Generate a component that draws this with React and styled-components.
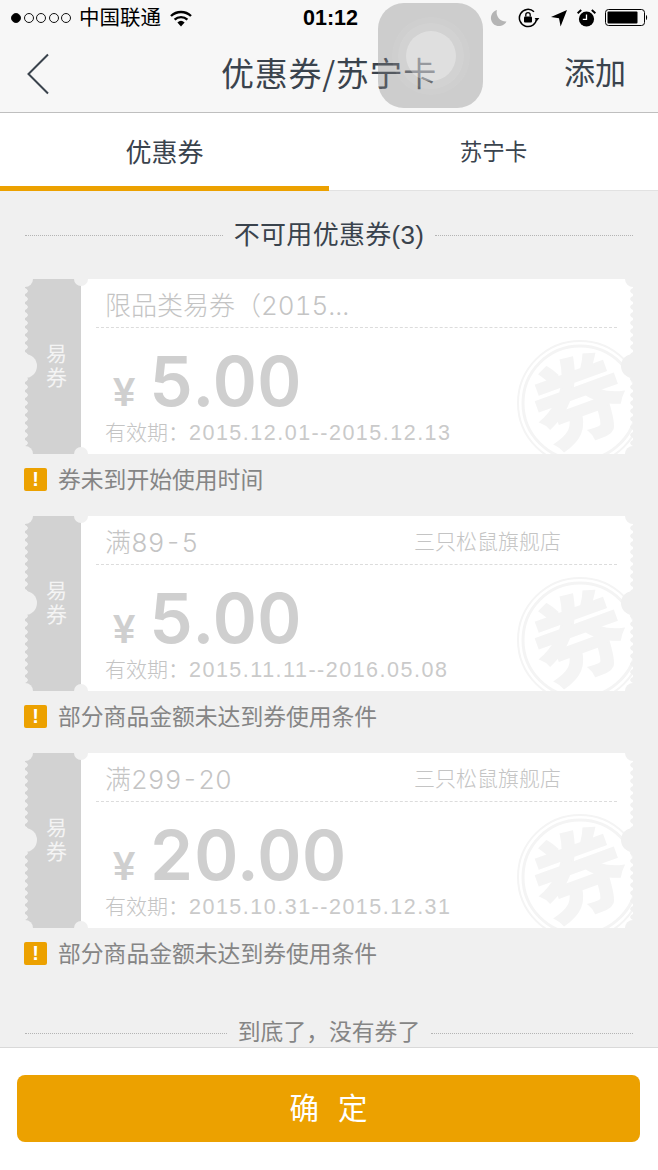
import React from 'react';
import styled, { createGlobalStyle } from 'styled-components';

const ORANGE = '#eca100';
const PAGE_BG = '#f0f0f0';

const GlobalStyle = createGlobalStyle`
  * { box-sizing: border-box; }
  html, body { margin: 0; padding: 0; background: ${PAGE_BG}; }
  body { font-family: "Liberation Sans", "Noto Sans CJK SC", sans-serif; }
`;

const Page = styled.div`
  position: relative;
  width: 658px;
  height: 1170px;
  display: flex;
  flex-direction: column;
  overflow: hidden;
  background: ${PAGE_BG};
`;

const Header = styled.header`
  background: #f7f7f7;
  border-bottom: 1px solid #bfbfbf;
  height: 113px;
`;

const StatusBar = styled.div`
  height: 36px;
  padding: 0 10px 0 11px;
  display: flex;
  align-items: center;
  color: #000;
`;

const StatusSide = styled.div`
  flex: 1;
  display: flex;
  align-items: center;
  justify-content: ${({ $end }) => ($end ? 'flex-end' : 'flex-start')};
`;

const Signal = styled.div`
  display: flex;
  gap: 2.5px;
  margin-right: 8px;
`;

const Dot = styled.span`
  width: 10px;
  height: 10px;
  border-radius: 50%;
  border: 1px solid #111;
  background: ${({ $on }) => ($on ? '#000' : 'transparent')};
`;

const Carrier = styled.span`
  font-size: 20.5px;
  line-height: 36px;
  margin-right: 9px;
`;

const Clock = styled.span`
  font-size: 21.5px;
  font-weight: 700;
  width: 60px;
  padding-left: 2px;
  text-align: center;
`;

const NavBar = styled.div`
  height: 76px;
  padding: 0 32px 0 26px;
  display: grid;
  grid-template-columns: 1fr auto 1fr;
  align-items: center;
  color: #3a434d;
`;

const BackButton = styled.div`
  width: 24px;
  display: flex;
`;

const NavTitle = styled.div`
  font-family: "Noto Sans CJK SC", sans-serif;
  font-size: 33px;
  line-height: 72px;
  letter-spacing: 0.7px;
  margin: 0 0 4px 6px;
`;

const NavAction = styled.div`
  font-size: 31px;
  line-height: 76px;
  text-align: right;
`;

const AssistiveTouch = styled.div`
  position: absolute;
  left: 378px;
  top: 3px;
  width: 105px;
  height: 105px;
  border-radius: 26px;
  background: rgba(130, 130, 130, 0.36);
  display: flex;
  align-items: center;
  justify-content: center;
`;

const Tabs = styled.nav`
  display: flex;
  height: 78px;
  background: #fff;
`;

const Tab = styled.div`
  flex: 1;
  display: flex;
  align-items: center;
  justify-content: center;
  padding-bottom: 4px;
  color: #3a434d;
  font-size: ${({ $active }) => ($active ? '26px' : '22.5px')};
  box-shadow: inset 0 ${({ $active }) => ($active ? `-5px 0 ${ORANGE}` : '-1px 0 #e2e2e2')};
`;

const Content = styled.main`
  flex: 1;
  padding: 22px 25px 0;
  overflow: hidden;
`;

const Divider = styled.div`
  display: flex;
  align-items: center;
  gap: ${({ $gap }) => $gap}px;
  height: 44px;
  font-size: ${({ $size }) => $size}px;
  letter-spacing: ${({ $spacing }) => $spacing || 0}px;
  color: ${({ $color }) => $color};
  white-space: nowrap;
`;

const DividerLabel = styled.span`
  padding-bottom: 5px;
`;

const DotLine = styled.span`
  flex: 1;
  border-top: 1px dotted #b4b4b4;
`;

const CouponList = styled.div`
  margin-top: 22px;
  display: flex;
  flex-direction: column;
`;

const CouponBlock = styled.section`
  height: 237px;
`;

const Ticket = styled.div`
  position: relative;
  height: 175px;
  display: flex;
  overflow: hidden;
  background: #fff;

  &::before,
  &::after {
    content: '';
    position: absolute;
    top: 0;
    bottom: 0;
    width: 3px;
    z-index: 2;
    background-size: 3px 8px;
    background-repeat: repeat-y;
  }
  &::before {
    left: 0;
    background-image: radial-gradient(circle at 0 50%, ${PAGE_BG} 2.4px, transparent 3px);
  }
  &::after {
    right: 0;
    background-image: radial-gradient(circle at 100% 50%, ${PAGE_BG} 2.4px, transparent 3px);
  }
`;

const Notch = styled.span`
  position: absolute;
  z-index: 3;
  left: ${({ $x }) => $x}px;
  top: ${({ $y }) => $y}px;
  width: ${({ $r }) => $r * 2}px;
  height: ${({ $r }) => $r * 2}px;
  margin: ${({ $r }) => -$r}px 0 0 ${({ $r }) => -$r}px;
  border-radius: 50%;
  background: ${PAGE_BG};
`;

const Stub = styled.div`
  width: 56px;
  flex: none;
  background: #d2d2d2;
  color: #f4f4f4;
  font-size: 21px;
  line-height: 24px;
  display: flex;
  align-items: center;
  justify-content: center;
  text-align: center;
  padding: 0 0 2px 7px;
`;

const TicketBody = styled.div`
  position: relative;
  flex: 1;
  padding: 0 16px 0 15px;
  color: #c4c4c4;
  font-family: Inter, "Noto Sans CJK SC", sans-serif;
  font-weight: 300;
  font-variant-numeric: tabular-nums;
`;

const TicketHead = styled.div`
  position: relative;
  z-index: 1;
  height: 49px;
  padding: 0 56px 0 9px;
  display: flex;
  align-items: center;
  justify-content: space-between;
  border-bottom: 1px dashed #dcdcdc;
  white-space: nowrap;
`;

const TicketTitle = styled.span`
  font-size: 26px;
`;

const Shop = styled.span`
  font-size: 21px;
`;

const Amount = styled.div`
  position: relative;
  z-index: 1;
  height: 90px;
  padding: 6px 0 0 17px;
  display: flex;
  align-items: baseline;
  font-family: Inter, sans-serif;
  font-weight: 600;
  color: #cfcfcf;
`;

const Currency = styled.span`
  font-family: "Liberation Sans", sans-serif;
  font-weight: 700;
  font-size: 40px;
  line-height: 94px;
  margin-right: 14px;
`;

const Value = styled.span`
  font-size: 69px;
  line-height: 94px;
`;

const Validity = styled.div`
  position: relative;
  z-index: 1;
  padding-left: 9px;
  display: flex;
  align-items: baseline;
  line-height: 30px;
  white-space: nowrap;
`;

const ValidityLabel = styled.span`
  font-size: 21px;
`;

const ValidityDates = styled.span`
  font-family: "Liberation Sans", sans-serif;
  font-weight: 400;
  font-size: 21.5px;
  letter-spacing: 1.5px;
  color: #cacaca;
`;

const Watermark = styled.svg`
  position: absolute;
  right: -12px;
  top: 59px;
  width: 130px;
  height: 130px;
`;

const Notice = styled.div`
  display: flex;
  align-items: center;
  gap: 11px;
  margin-top: 14px;
  height: 23px;
  margin-left: -1px;
  font-size: 22.8px;
  color: #858585;
  white-space: nowrap;
`;

const NoticeText = styled.span`
  padding-bottom: 2px;
`;

const WarnIcon = styled.span`
  width: 23px;
  height: 23px;
  border-radius: 2px;
  background: ${ORANGE};
  color: #fff;
  font-size: 20px;
  font-weight: 700;
  display: flex;
  align-items: center;
  justify-content: center;
`;

const Footer = styled.footer`
  height: 123px;
  flex: none;
  background: #fff;
  border-top: 1px solid #d9d9d9;
  padding: 27px 18px 0 17px;
`;

const Confirm = styled.button`
  display: block;
  width: 100%;
  height: 67px;
  border: 0;
  border-radius: 8px;
  background: ${ORANGE};
  color: #fff;
  font-family: inherit;
  font-size: 29.5px;
  letter-spacing: 19px;
  padding: 0 0 5px 19px;
`;

const EndRow = styled.div`
  margin-top: 21px;
`;

const coupons = [
  {
    title: '限品类易券（2015...',
    shop: '',
    currency: '¥',
    value: '5.00',
    dates: '2015.12.01--2015.12.13',
    notice: '券未到开始使用时间',
  },
  {
    title: '满89-5',
    shop: '三只松鼠旗舰店',
    currency: '¥',
    value: '5.00',
    dates: '2015.11.11--2016.05.08',
    notice: '部分商品金额未达到券使用条件',
  },
  {
    title: '满299-20',
    shop: '三只松鼠旗舰店',
    currency: '¥',
    value: '20.00',
    dates: '2015.10.31--2015.12.31',
    notice: '部分商品金额未达到券使用条件',
  },
];

const WifiIcon = () => (
  <svg width="22" height="17" viewBox="0 0 22 17">
    <path d="M1 6 A14.5 14.5 0 0 1 21 6" fill="none" stroke="#000" strokeWidth="2.4" />
    <path d="M4.6 9.6 A9.5 9.5 0 0 1 17.4 9.6" fill="none" stroke="#000" strokeWidth="2.4" />
    <path d="M11 16.5 L7.4 12.4 A5.4 5.4 0 0 1 14.6 12.4 Z" fill="#000" />
  </svg>
);

const MoonIcon = () => (
  <svg width="17" height="18" viewBox="0 0 17 18" style={{ marginRight: 11 }}>
    <path d="M7 1 A8.2 8.2 0 1 0 16.5 12.5 A9 9 0 0 1 7 1 Z" fill="#b5b5b5" />
  </svg>
);

const RotationLockIcon = () => (
  <svg width="22" height="20" viewBox="0 0 22 20" style={{ marginRight: 11 }}>
    <path d="M18.6 10.5 A8.6 8.6 0 1 1 16 3.8" fill="none" stroke="#000" strokeWidth="1.5" />
    <path d="M16.6 10 L21.4 10 L19 13 Z" fill="#000" />
    <rect x="6" y="8.5" width="8" height="6" rx="1" fill="#000" />
    <path d="M7.8 8.5 V6.8 A2.2 2.2 0 0 1 12.2 6.8 V8.5" fill="none" stroke="#000" strokeWidth="1.3" />
  </svg>
);

const LocationIcon = () => (
  <svg width="16" height="17" viewBox="0 0 16 17" style={{ marginRight: 10 }}>
    <path d="M16 0 L9.6 16.5 L8 8.2 L0 7 Z" fill="#000" />
  </svg>
);

const AlarmIcon = () => (
  <svg width="19" height="18" viewBox="0 0 19 18" style={{ marginRight: 9 }}>
    <circle cx="9.5" cy="10" r="7.6" fill="#000" />
    <path d="M9.5 5.5 V10.4 H5.8" fill="none" stroke="#fff" strokeWidth="1.3" />
    <path d="M0.6 4.2 L4.2 1 M18.4 4.2 L14.8 1" stroke="#000" strokeWidth="2" />
  </svg>
);

const BatteryIcon = () => (
  <svg width="43" height="18" viewBox="0 0 43 18">
    <rect x="0.5" y="0.5" width="39" height="16" rx="3" fill="none" stroke="#000" />
    <rect x="2.5" y="2.5" width="30" height="12" rx="1" fill="#000" />
    <path d="M41 6 C42.5 6.4 42.5 10.6 41 11 Z" fill="#000" />
  </svg>
);

const Coupon = ({ item }) => (
  <CouponBlock>
    <Ticket>
      <Stub>易<br />券</Stub>
      <TicketBody>
        <Watermark viewBox="0 0 130 130">
          <circle cx="65" cy="65" r="62" fill="none" stroke="#f4f4f4" strokeWidth="2" />
          <circle cx="65" cy="65" r="57" fill="none" stroke="#f4f4f4" strokeWidth="3" />
          <text x="65" y="97" textAnchor="middle" fontSize="92" fontWeight="700" fill="#f4f4f4" stroke="#f4f4f4" strokeWidth="2" fontFamily="Noto Sans CJK SC" transform="rotate(-20 65 65)">券</text>
        </Watermark>
        <TicketHead>
          <TicketTitle>{item.title}</TicketTitle>
          {item.shop && <Shop>{item.shop}</Shop>}
        </TicketHead>
        <Amount>
          <Currency>{item.currency}</Currency>
          <Value>{item.value}</Value>
        </Amount>
        <Validity>
          <ValidityLabel>有效期：</ValidityLabel>
          <ValidityDates>{item.dates}</ValidityDates>
        </Validity>
      </TicketBody>
      <Notch $x={0} $y={0} $r={8} />
      <Notch $x={0} $y={175} $r={8} />
      <Notch $x={608} $y={0} $r={8} />
      <Notch $x={608} $y={175} $r={8} />
      <Notch $x={56} $y={0} $r={7} />
      <Notch $x={56} $y={175} $r={7} />
      <Notch $x={0} $y={87} $r={12} />
      <Notch $x={608} $y={87} $r={12} />
    </Ticket>
    <Notice>
      <WarnIcon>!</WarnIcon>
      <NoticeText>{item.notice}</NoticeText>
    </Notice>
  </CouponBlock>
);

const App = () => {
  return (
    <Page>
      <GlobalStyle />
      <Header>
        <StatusBar>
          <StatusSide>
            <Signal>
              {[true, false, false, false, false].map((on, index) => (
                <Dot $on={on} key={index} />
              ))}
            </Signal>
            <Carrier>中国联通</Carrier>
            <WifiIcon />
          </StatusSide>
          <Clock>01:12</Clock>
          <StatusSide $end>
            <MoonIcon />
            <RotationLockIcon />
            <LocationIcon />
            <AlarmIcon />
            <BatteryIcon />
          </StatusSide>
        </StatusBar>
        <NavBar>
          <BackButton>
            <svg width="24" height="42" viewBox="0 0 24 42">
              <path d="M22 1.5 L2.5 21 L22 40.5" fill="none" stroke="#3a434d" strokeWidth="2" />
            </svg>
          </BackButton>
          <NavTitle>优惠券/苏宁卡</NavTitle>
          <NavAction>添加</NavAction>
        </NavBar>
      </Header>
      <AssistiveTouch>
        <svg width="80" height="80" viewBox="0 0 80 80">
          <circle cx="40" cy="40" r="39" fill="#fff" opacity="0.06" />
          <circle cx="40" cy="40" r="33" fill="#fff" opacity="0.08" />
          <circle cx="40" cy="40" r="25" fill="#fff" opacity="0.3" />
        </svg>
      </AssistiveTouch>
      <Tabs>
        <Tab $active>优惠券</Tab>
        <Tab>苏宁卡</Tab>
      </Tabs>
      <Content>
        <Divider $gap={11} $size={26} $spacing={0.3} $color="#3a434d">
          <DotLine />
          <DividerLabel>不可用优惠券(3)</DividerLabel>
          <DotLine />
        </Divider>
        <CouponList>
          {coupons.map((item, index) => (
            <Coupon item={item} key={index} />
          ))}
        </CouponList>
        <EndRow>
          <Divider $gap={11} $size={22.8} $color="#858585">
            <DotLine />
            <DividerLabel>到底了，没有券了</DividerLabel>
            <DotLine />
          </Divider>
        </EndRow>
      </Content>
      <Footer>
        <Confirm>确定</Confirm>
      </Footer>
    </Page>
  );
};

export default App;
